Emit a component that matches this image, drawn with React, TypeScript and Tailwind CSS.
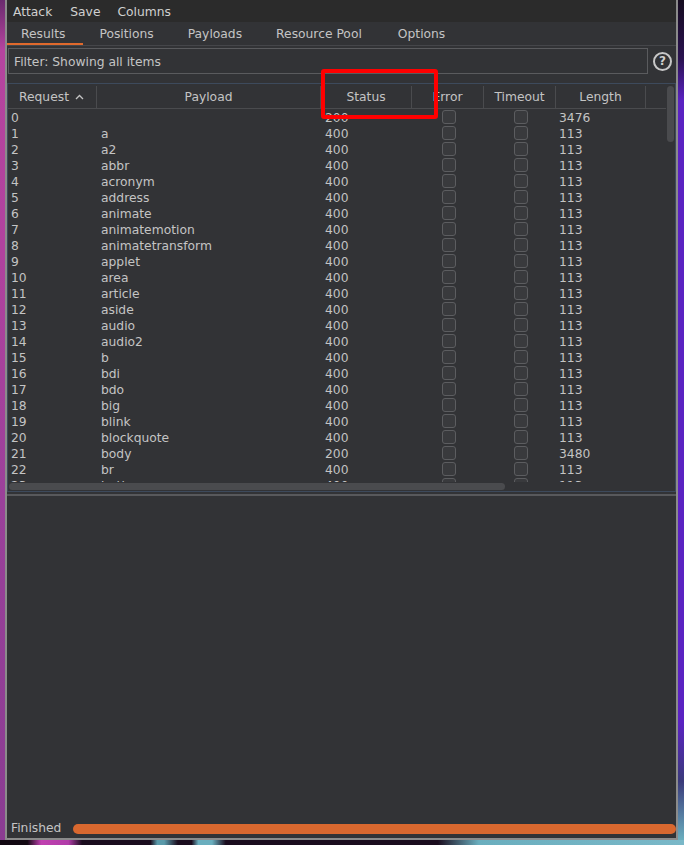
import React from "react";

const payloads = [
  "", "a", "a2", "abbr", "acronym", "address", "animate", "animatemotion",
  "animatetransform", "applet", "area", "article", "aside", "audio", "audio2",
  "b", "bdi", "bdo", "big", "blink", "blockquote", "body", "br", "button",
];

function Check() {
  return <div className="mt-[1px] h-[14px] w-[14px] rounded-[3px] border border-[#5c5d60] bg-[#393a3d]" />;
}

export default function App() {
  return (
    <div className="relative flex h-[845px] w-[684px] flex-col overflow-hidden bg-[#140a18] font-['DejaVu_Sans',sans-serif] text-[12.3px] text-[#c4c4c4]">
      <div className="flex h-[840px]">
        <div className="w-[5px] bg-[linear-gradient(180deg,#6a2a6e_0%,#b5449f_6%,#b0429e_30%,#9a409a_60%,#8a3c92_100%)]" />
        <div className="flex w-[673px] flex-col border-x-2 border-b-2 border-[#8b8b8b] bg-[#323336]">
          {/* menu bar */}
          <div className="flex h-[22px] items-center bg-[#2b2b2b] pt-[2px] text-[#d0d0d0]">
            <span className="ml-[6px]">Attack</span>
            <span className="ml-[18px]">Save</span>
            <span className="ml-[17px]">Columns</span>
          </div>
          {/* tabs */}
          <div className="flex h-[24px] border-b border-[#45464a]">
            <div className="flex h-[23px] items-center pl-[14px] pr-[18px] pt-[2px] shadow-[inset_0_-2px_0_#e0692c]">Results</div>
            <div className="flex h-[23px] items-center pl-[16px] pr-[17px] pt-[2px]">Positions</div>
            <div className="flex h-[23px] items-center px-[17px] pt-[2px]">Payloads</div>
            <div className="flex h-[23px] items-center pl-[17px] pr-[19px] pt-[2px]">Resource Pool</div>
            <div className="flex h-[23px] items-center px-[17px] pt-[2px]">Options</div>
          </div>
          {/* filter */}
          <div className="mt-[2px] flex h-[26px] items-center">
            <div className="ml-[1px] flex h-[26px] w-[640px] items-center border border-[#5a5b5e] pl-[5px] pt-[2px]">
              Filter: Showing all items
            </div>
            <div className="ml-[5px] flex h-[19px] w-[19px] items-center justify-center rounded-full border-2 border-[#c8c8c8] text-[12px] font-bold leading-none text-[#d0d0d0]">
              ?
            </div>
          </div>
          {/* table pane */}
          <div className="mt-[9px] flex h-[409px] flex-col border border-[#3d4a5c]">
            <div className="flex h-[399px]">
              <div className="flex w-[658px] flex-col">
                <div className="flex h-[25px] border-b border-[#4a4b4e] pt-[2px]">
                  <div className="flex w-[89px] items-center border-r border-[#4a4b4e] pl-[11px]">
                    <span>Request</span>
                    <svg className="ml-[6px]" width="9" height="6" viewBox="0 0 9 6">
                      <path d="M1 5 L4.5 1.5 L8 5" fill="none" stroke="#c4c4c4" strokeWidth="1.3" />
                    </svg>
                  </div>
                  <div className="flex w-[224px] items-center justify-center border-r border-[#4a4b4e]">Payload</div>
                  <div className="flex w-[91px] items-center justify-center border-r border-[#4a4b4e]">Status</div>
                  <div className="flex w-[72px] items-center justify-center border-r border-[#4a4b4e]">Error</div>
                  <div className="flex w-[72px] items-center justify-center border-r border-[#4a4b4e]">Timeout</div>
                  <div className="flex w-[90px] items-center justify-center border-r border-[#4a4b4e]">Length</div>
                  <div className="w-[20px]" />
                </div>
                <div className="h-[373px] overflow-hidden">
                  {payloads.map((p, i) => {
                    const ok = i === 0 || i === 21;
                    return (
                      <div key={i} className="flex h-[16px] leading-[14px]">
                        <div className="w-[89px] pl-[3px] pt-[2px]">{i}</div>
                        <div className="w-[224px] pl-[4px] pt-[2px]">{p}</div>
                        <div className="w-[91px] pl-[4px] pt-[2px]">{ok ? "200" : "400"}</div>
                        <div className="w-[72px] pl-[30px]"><Check /></div>
                        <div className="w-[72px] pl-[30px]"><Check /></div>
                        <div className="w-[90px] pl-[3px] pt-[2px]">{i === 0 ? "3476" : i === 21 ? "3480" : "113"}</div>
                      </div>
                    );
                  })}
                </div>
                <div className="h-[1px]" />
              </div>
              <div className="w-[9px]">
                <div className="ml-[1px] mt-[2px] h-[56px] w-[7px] rounded-full bg-[#4a4b4e]" />
              </div>
            </div>
            <div className="h-[8px]">
              <div className="ml-[1px] h-[7px] w-[496px] rounded-full bg-[#4a4b4e]" />
            </div>
          </div>
          {/* divider */}
          <div className="h-[4px] pt-[2px]">
            <div className="h-[2px] bg-[#58595c]" />
          </div>
          <div className="flex-1" />
          {/* status */}
          <div className="flex h-[22px] items-center pt-[3px]">
            <div className="w-[66px] pl-[4px]">Finished</div>
            <div className="h-[10px] flex-1 rounded-full bg-[#d9682f]" />
          </div>
        </div>
        <div className="flex-1 bg-[linear-gradient(180deg,#160c20_0%,#2a1250_7%,#5a22c2_12%,#5a22c2_86%,#3a3a7a_93%,#6aaebe_100%)]" />
      </div>
      <div className="h-[5px] bg-[linear-gradient(90deg,#120812_0%,#120812_4%,#c040b0_6%,#b03ca8_10%,#1a0c1e_12%,#1a0c1e_22%,#5a9aaa_23%,#5a9aaa_24%,#1a0c1e_26%,#1a0c1e_28%,#6aaebe_29%,#6aaebe_31%,#1a0c1e_33%,#1a0c1e_64%,#6aaebe_70%,#7ab8c8_100%)]" />
      <div className="absolute left-[321px] top-[69px] h-[50px] w-[117px] rounded-[3px] border-4 border-[#ff0000]" />
    </div>
  );
}
